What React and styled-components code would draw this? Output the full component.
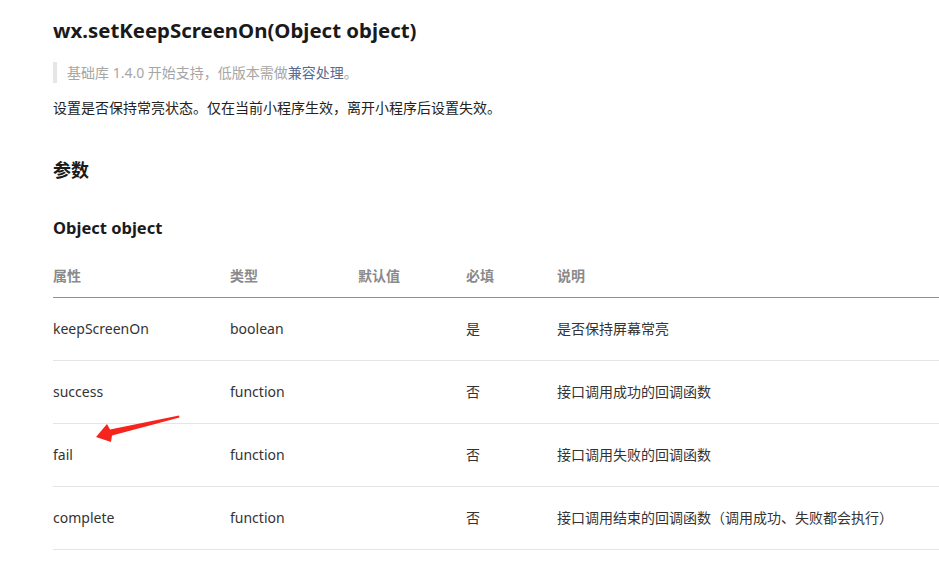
import React from "react";
import styled, { createGlobalStyle } from "styled-components";

const GlobalStyle = createGlobalStyle`
  html, body {
    margin: 0;
    padding: 0;
    background: #fff;
    overflow: hidden;
  }
  body {
    font-family: "Noto Sans", "Noto Sans CJK SC", sans-serif;
    color: #333;
  }
`;

const Page = styled.div`
  position: relative;
  width: 939px;
  height: 573px;
  padding-left: 53px;
  box-sizing: border-box;
`;

const Title = styled.h1`
  margin: 0;
  padding-top: 16px;
  font-size: 20.4px;
  line-height: 28px;
  font-weight: 700;
  color: #1a1a1a;
`;

const Quote = styled.blockquote`
  margin: 18px 0 0;
  padding-left: 10px;
  border-left: 4px solid #e6e6e6;
  font-size: 14px;
  line-height: 21px;
  color: #a6a6a6;
`;

const QuoteLink = styled.span`
  color: #576b95;
`;

const Para = styled.p`
  margin: 14px 0 0;
  font-size: 14px;
  line-height: 22px;
  color: #222;
`;

const SectionTitle = styled.h2`
  margin: 38px 0 0;
  font-size: 18px;
  line-height: 26px;
  font-weight: 700;
  color: #1a1a1a;
`;

const SubTitle = styled.h3`
  margin: 33px 0 0;
  font-size: 16.5px;
  line-height: 24px;
  font-weight: 700;
  color: #1a1a1a;
`;

const Table = styled.div`
  margin-top: 15px;
  display: grid;
  grid-template-columns: 177px 128px 108px 91px 1fr;
`;

const Head = styled.div`
  padding: 10px 0;
  font-size: 14px;
  line-height: 22px;
  font-weight: 700;
  color: #8a8a8a;
  border-bottom: 1px solid #8f8f8f;
`;

const Cell = styled.div`
  padding: 20px 0;
  font-size: 14px;
  line-height: 22px;
  color: #333;
  border-bottom: 1px solid #e5e5e5;
  white-space: nowrap;
`;

const Arrow = styled.svg`
  position: absolute;
  left: 90px;
  top: 410px;
  width: 95px;
  height: 36px;
  pointer-events: none;
`;

const heads = ["属性", "类型", "默认值", "必填", "说明"];

const rows = [
  ["keepScreenOn", "boolean", "", "是", "是否保持屏幕常亮"],
  ["success", "function", "", "否", "接口调用成功的回调函数"],
  ["fail", "function", "", "否", "接口调用失败的回调函数"],
  ["complete", "function", "", "否", "接口调用结束的回调函数（调用成功、失败都会执行）"],
];

export default function App() {
  return (
    <>
      <GlobalStyle />
      <Page>
        <Title>wx.setKeepScreenOn(Object object)</Title>
        <Quote>
          基础库 1.4.0 开始支持，低版本需做<QuoteLink>兼容处理</QuoteLink>。
        </Quote>
        <Para>设置是否保持常亮状态。仅在当前小程序生效，离开小程序后设置失效。</Para>
        <SectionTitle>参数</SectionTitle>
        <SubTitle>Object object</SubTitle>
        <Table>
          {heads.map((h) => (
            <Head key={h}>{h}</Head>
          ))}
          {rows.map((r) =>
            r.map((c, i) => <Cell key={r[0] + i}>{c}</Cell>)
          )}
        </Table>
        <Arrow viewBox="0 0 95 36">
          <polygon
            points="6,27 17,14 20,19.5 89,5.5 89.5,7.5 22,25.5 21,32"
            fill="#f5241c"
          />
        </Arrow>
      </Page>
    </>
  );
}
